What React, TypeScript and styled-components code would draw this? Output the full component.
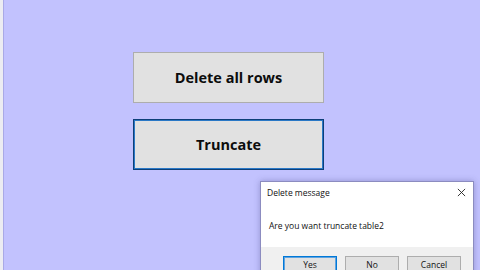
import React from "react";
import styled, { createGlobalStyle } from "styled-components";

const Global = createGlobalStyle`
  html, body { margin: 0; padding: 0; }
  body { width: 480px; height: 270px; overflow: hidden; background: #c2c2fe; }
  #root { width: 480px; height: 270px; }
`;

const Screen = styled.div`
  position: relative;
  width: 480px;
  height: 270px;
  display: flex;
  overflow: hidden;
  font-family: "Open Sans", "Liberation Sans", sans-serif;
`;

const EdgeStrip = styled.div`
  width: 3px;
  background: #ececf2;
  border-right: 1px solid #a9a9e6;
  flex: none;
`;

const Canvas = styled.div`
  flex: 1;
  background: #c2c2fe;
  display: flex;
  flex-direction: column;
  gap: 16px;
  padding: 52px 0 0 129px;
`;

const BigButton = styled.button<{ $focused?: boolean }>`
  width: 191px;
  height: 51px;
  box-sizing: border-box;
  margin: 0;
  background: #e1e1e1;
  border: 1px solid ${(p) => (p.$focused ? "#0d3f78" : "#adadad")};
  box-shadow: ${(p) => (p.$focused ? "inset 0 0 0 1px #2a78c6" : "none")};
  font-family: "Open Sans", "Liberation Sans", sans-serif;
  font-weight: 700;
  font-size: 14.5px;
  color: #0c0c0c;
  padding: 0;
`;

const Dialog = styled.div`
  position: absolute;
  left: 260px;
  top: 181px;
  width: 214px;
  height: 100px;
  box-sizing: border-box;
  background: #fff;
  border: 1px solid #8c8cc0;
  box-shadow: 0 0 6px rgba(60, 60, 120, 0.35);
  display: flex;
  flex-direction: column;
  font-family: "Open Sans", "Liberation Sans", sans-serif;
  color: #111;
`;

const TitleBar = styled.div`
  height: 21px;
  display: flex;
  align-items: center;
  justify-content: space-between;
  padding: 0 6px 0 6px;
  font-size: 8.5px;
`;

const CloseGlyph = styled.svg`
  width: 9px;
  height: 9px;
  margin-right: 1px;
`;

const Message = styled.div`
  height: 44px;
  display: flex;
  align-items: center;
  padding-left: 8px;
  font-size: 8.5px;
`;

const Footer = styled.div`
  flex: 1;
  background: #f0f0f0;
  display: flex;
  justify-content: flex-end;
  align-items: flex-start;
  gap: 8px;
  padding: 9px 12px 0 0;
`;

const SmallButton = styled.button<{ $default?: boolean }>`
  width: 54px;
  height: 20px;
  box-sizing: border-box;
  margin: 0;
  padding: 0 0 4px;
  background: #e1e1e1;
  border: 1px solid ${(p) => (p.$default ? "#0078d7" : "#adadad")};
  box-shadow: ${(p) => (p.$default ? "inset 0 0 0 1px #5fa3e0" : "none")};
  font-family: "Open Sans", "Liberation Sans", sans-serif;
  font-size: 8.5px;
  color: #111;
`;

export default function App() {
  return (
    <>
      <Global />
      <Screen>
        <EdgeStrip />
        <Canvas>
          <BigButton>Delete all rows</BigButton>
          <BigButton $focused>Truncate</BigButton>
        </Canvas>
        <Dialog>
          <TitleBar>
            <span>Delete message</span>
            <CloseGlyph viewBox="0 0 10 10">
              <path d="M1 1 L9 9 M9 1 L1 9" stroke="#222" strokeWidth="1" />
            </CloseGlyph>
          </TitleBar>
          <Message>Are you want truncate table2</Message>
          <Footer>
            <SmallButton $default>Yes</SmallButton>
            <SmallButton>No</SmallButton>
            <SmallButton>Cancel</SmallButton>
          </Footer>
        </Dialog>
      </Screen>
    </>
  );
}
